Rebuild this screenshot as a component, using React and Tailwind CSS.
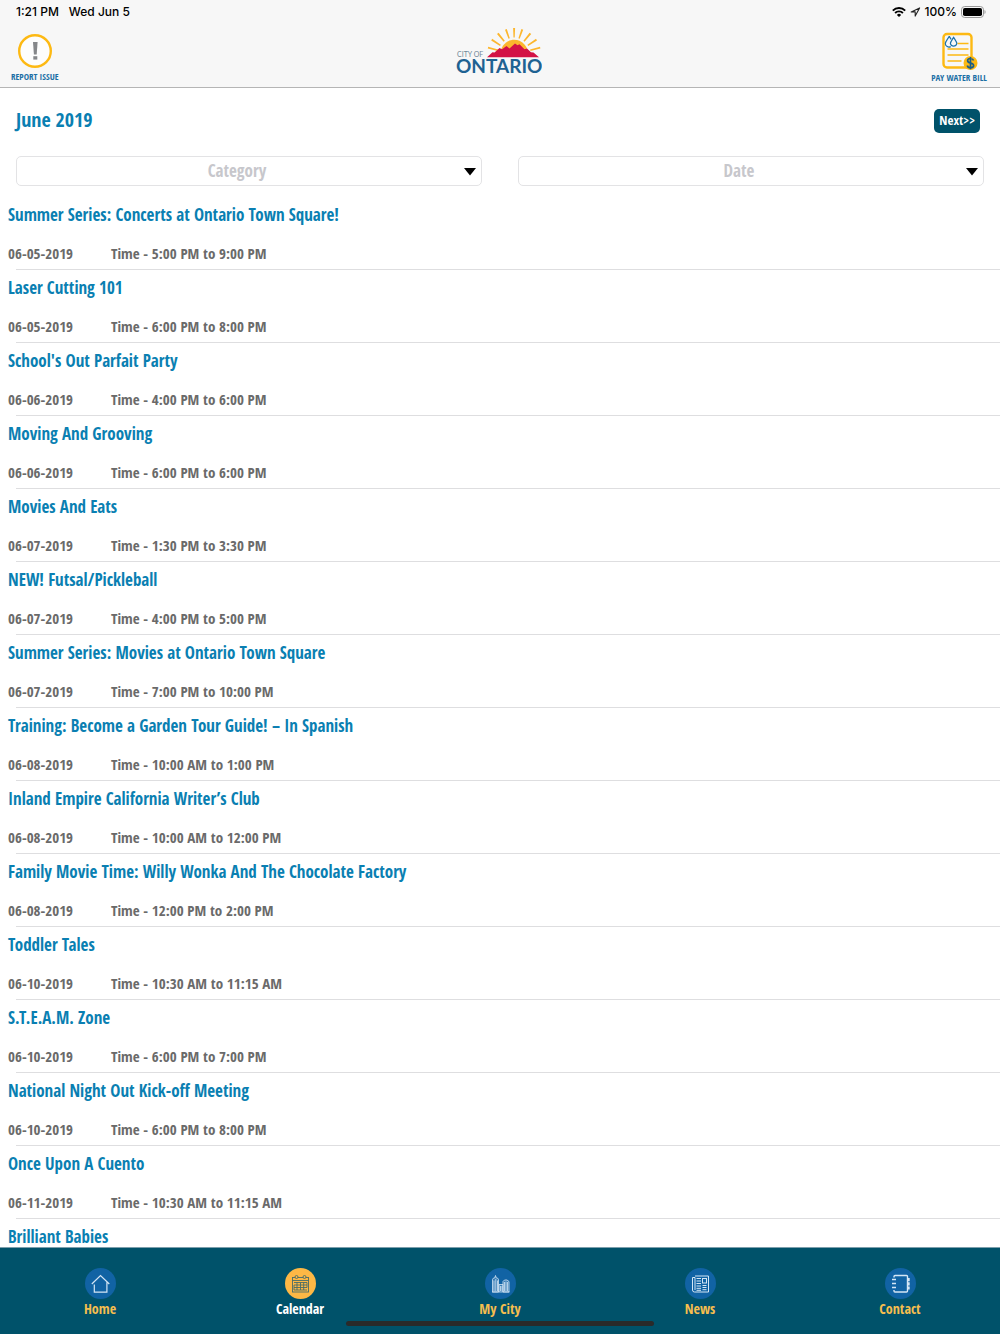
import React, { useState } from 'react'

const events = [
  { title: 'Summer Series: Concerts at Ontario Town Square!', date: '06-05-2019', time: '5:00 PM to 9:00 PM' },
  { title: 'Laser Cutting 101', date: '06-05-2019', time: '6:00 PM to 8:00 PM' },
  { title: "School's Out Parfait Party", date: '06-06-2019', time: '4:00 PM to 6:00 PM' },
  { title: 'Moving And Grooving', date: '06-06-2019', time: '6:00 PM to 6:00 PM' },
  { title: 'Movies And Eats', date: '06-07-2019', time: '1:30 PM to 3:30 PM' },
  { title: 'NEW! Futsal/Pickleball', date: '06-07-2019', time: '4:00 PM to 5:00 PM' },
  { title: 'Summer Series: Movies at Ontario Town Square', date: '06-07-2019', time: '7:00 PM to 10:00 PM' },
  { title: 'Training: Become a Garden Tour Guide! – In Spanish', date: '06-08-2019', time: '10:00 AM to 1:00 PM' },
  { title: 'Inland Empire California Writer’s Club', date: '06-08-2019', time: '10:00 AM to 12:00 PM' },
  { title: 'Family Movie Time: Willy Wonka And The Chocolate Factory', date: '06-08-2019', time: '12:00 PM to 2:00 PM' },
  { title: 'Toddler Tales', date: '06-10-2019', time: '10:30 AM to 11:15 AM' },
  { title: 'S.T.E.A.M. Zone', date: '06-10-2019', time: '6:00 PM to 7:00 PM' },
  { title: 'National Night Out Kick-off Meeting', date: '06-10-2019', time: '6:00 PM to 8:00 PM' },
  { title: 'Once Upon A Cuento', date: '06-11-2019', time: '10:30 AM to 11:15 AM' },
  { title: 'Brilliant Babies' },
]

function StatusBar() {
  return (
    <div className="flex h-6 items-center justify-between pl-4 pr-3.5 font-['Inter',sans-serif] text-xs font-medium text-black">
      <div className="flex gap-2.5">
        <span>1:21 PM</span>
        <span>Wed Jun 5</span>
      </div>
      <div className="flex items-center gap-1">
        <svg width="14" height="10" viewBox="0 0 14 10" fill="none" stroke="#000" strokeWidth="1.9">
          <path d="M0.8 3.6a8.8 8.8 0 0 1 12.4 0" />
          <path d="M3.1 6a5.5 5.5 0 0 1 7.8 0" />
          <path d="M7 10 4.9 7.9a3 3 0 0 1 4.2 0z" fill="#000" stroke="none" />
        </svg>
        <svg width="11" height="10" viewBox="0 0 11 10" fill="none" stroke="#222" strokeWidth="1.1" strokeLinejoin="round">
          <path d="M9.6 0.9 1.2 4.9h4v4.2z" />
        </svg>
        <span>100%</span>
        <svg width="25" height="12" viewBox="0 0 25 12">
          <rect x="0.5" y="0.5" width="22" height="11" rx="3.2" fill="none" stroke="#999" />
          <rect x="2" y="2" width="19" height="8" rx="1.8" fill="#000" />
          <path d="M23.5 4v4c1.5-.6 1.5-3.4 0-4z" fill="#999" />
        </svg>
      </div>
    </div>
  )
}

function ReportIcon() {
  return (
    <svg width="34" height="34" viewBox="0 0 34 34">
      <circle cx="17" cy="17" r="15.8" fill="#fdfdfd" stroke="#fdb913" strokeWidth="2.4" />
      <path d="M15 8h4.6l-.9 12.4h-2.8z" fill="#85878a" />
      <path d="M15.3 22.200h4v3.400h-4z" fill="#85878a" />
    </svg>
  )
}

function BillIcon() {
  return (
    <svg width="38" height="38" viewBox="0 0 38 38" fill="none">
      <rect x="3.5" y="2" width="28" height="33.5" rx="3.5" stroke="#fdb913" strokeWidth="2.4" />
      <path d="M17.5 11.5h11M7.5 17h21M7.5 23h21M7.5 29h14" stroke="#fdb913" strokeWidth="1.3" />
      <path d="M9.3 4.4C7 8 5.3 9.8 5.3 11.7a3.7 3.7 0 0 0 5.4 2.900M9.3 4.4l1.8 3" stroke="#1b72ab" strokeWidth="1.2" />
      <path d="M13.600 5.400c-1.900 3-3.200 4.500-3.200 6.200a3.300 3.300 0 0 0 6.400 0c0-1.700-1.300-3.200-3.200-6.200z" stroke="#1b72ab" strokeWidth="1.2" />
      <circle cx="30.5" cy="31" r="7" fill="#fdb913" />
      <path d="M33.500 28.400c-.4-1.300-1.500-1.900-3-1.900-1.700 0-2.900.8-2.900 2.200 0 3.200 6 1.500 6 4.700 0 1.500-1.300 2.300-3.100 2.300-1.700 0-2.900-.7-3.200-2.200M30.500 25v12.200" stroke="#1d5e85" strokeWidth="1.700" />
    </svg>
  )
}

function CityLogo() {
  return (
    <svg width="86" height="48" viewBox="0 0 86 48" role="img" aria-label="City of Ontario">
      <g fill="#fcb62d">
        <path d="M57.1 0h2l-.4 9.500h-1.200zM49 1.700l1.800-.6 3 9.200-1.300.5zM65.400 1.100l1.800.6-3.500 9.100-1.300-.5zM41 5.900l1.600-1.200 6.200 8-1.200 1zM73.600 4.700l1.600 1.200-6.600 7.800-1.200-1zM35.200 12.400l1-1.600 8.600 6-.8 1.200zM80 10.800l1 1.600-8.800 5.600-.8-1.200zM31.800 20.600l.4-1.900 10 2.800-.5 1.400zM84 18.700l.4 1.900-9.900 2.300-.5-1.400z" />
        <path d="M44.500 28c-1-9 5.500-16.200 13.700-16.200S73 19 72 28z" />
      </g>
      <path d="M31 29.200l5.500-5 2 .3 5-4.400 2.500 1.200 4.500-3.300 3 2.400 5.500-5 2.500 1.800 2-1 5 5 2.500-.6 4 3.600 2.500.3 5.500 4.700z" fill="#d31245" />
      <text x="1" y="29" fill="#6f8798" fontFamily="Lato, sans-serif" fontSize="7">CITY OF</text>
      <text x="0" y="45" fill="#1f6292" fontFamily="Lato, sans-serif" fontWeight="700" fontSize="19">ONTARIO</text>
    </svg>
  )
}

function FilterSelect({ label }) {
  return (
    <div className="relative flex-1">
      <select
        aria-label={label}
        defaultValue=""
        className="block h-[30px] w-full appearance-none rounded-[5px] border border-[#e3e3e5] bg-white pr-6 text-center text-[17px] font-bold text-[#c7c7cc] [text-align-last:center]"
      >
        <option value="">{label}</option>
      </select>
      <svg className="pointer-events-none absolute right-1.5 top-3" width="12" height="8" viewBox="0 0 12 8">
        <path d="M0 0h12L6 7.5z" fill="#000" />
      </svg>
    </div>
  )
}

function EventRow({ event }) {
  return (
    <li>
      <div className="flex h-[72px] flex-col justify-between py-1.5 pl-2">
        <h2 className="text-[17px] leading-6 font-bold text-[#0a7fb2]">{event.title}</h2>
        {event.date && (
          <div className="flex text-[15px] leading-5 font-bold text-[#6a6a6a]">
            <span className="w-[103px]">{event.date}</span>
            <span>Time - {event.time}</span>
          </div>
        )}
      </div>
      <div className="ml-4 h-px bg-[#dedee0]" />
    </li>
  )
}

const tabs = [
  {
    name: 'Home',
    icon: (
      <path d="M6.8 16 15.5 7.5 24.3 16M9.3 16.5v7.7h12.6V14" strokeWidth="1.2" />
    ),
  },
  {
    name: 'Calendar',
    icon: (
      <g strokeWidth="0.9">
        <rect x="7.5" y="9.5" width="16" height="14.5" />
        <path d="M7.5 12.5h16" />
        <circle cx="11.5" cy="9" r="1.5" fill="#fdb845" />
        <circle cx="19.5" cy="9" r="1.5" fill="#fdb845" />
        <path d="M9 14.5h13M9 17h13M9 19.5h13M9 22h13M9 17v5M12 14.5V22M15.5 14.5V22M18.7 14.5V22M22 14.5v5" />
      </g>
    ),
  },
  {
    name: 'My City',
    icon: (
      <g strokeWidth="0.8">
        <path d="M7.5 24V11.5l1-1.5h1.2l.8-2.5.8 2.500h1.200l1 1.500V24zM18 24V13.500l1.500-1.500h2.500l2 1.500V24zM14 24v-7.500h4V24M7 24h17.500" fill="#76a7d2" fillOpacity="0.4" />
        <path d="M9 12.5V23M10.8 11v12M12.5 12.5V23M15.5 18v5M17 18v5M19.5 14v9M21 13.5V23M22.5 14v9" />
      </g>
    ),
  },
  {
    name: 'News',
    icon: (
      <g strokeWidth="1">
        <path d="M10 8h13.5v16H9.5a2 2 0 0 1-2-2V9.5H10V22" />
        <rect x="17.5" y="10.5" width="4" height="4.5" />
        <path d="M11.5 10.5H16M11.5 13H16M11.5 15.5H16M11.5 18H16M11.5 20.3H16M17.5 17.5h4M17.5 19.5h4M17.5 21.7h4M11.5 22.3H16" />
      </g>
    ),
  },
  {
    name: 'Contact',
    icon: (
      <g strokeWidth="1.4">
        <path d="M9 9.500V8.500q0-1 1-1h11.500q1 0 1 1v14.500q0 1-1 1H10q-1 0-1-1V22" />
        <path d="M7 11.5h4M7 15.5h4M7 19.5h4" strokeWidth="1.6" />
        <path d="M23.7 10v3.2M23.7 14.2v3.2M23.7 18.4v3.2" strokeWidth="2" />
      </g>
    ),
  },
]

function TabBar({ active, onChange }) {
  return (
    <nav className="relative grid h-[87px] shrink-0 grid-cols-5 border-t border-[#7d9fac] bg-[#00526a]">
      {tabs.map((tab) => {
        const isActive = tab.name === active
        return (
          <button key={tab.name} type="button" className="flex flex-col items-center pt-5" onClick={() => onChange(tab.name)}>
            <svg width="31" height="31" viewBox="0 0 31 31" fill="none" stroke={isActive ? '#4a6d68' : '#d5e6f5'}>
              <circle cx="15.5" cy="15.5" r="15.5" fill={isActive ? '#fdb845' : '#1163a4'} stroke="none" />
              {tab.icon}
            </svg>
            <span className={isActive ? 'text-sm leading-5 font-bold text-white' : 'text-sm leading-5 font-bold text-[#f5be4f]'}>
              {tab.name}
            </span>
          </button>
        )
      })}
      <div className="absolute bottom-2 left-1/2 h-[5px] w-[308px] -translate-x-1/2 rounded-full bg-[#2a2a2a]" />
    </nav>
  )
}

export default function App() {
  const [active, setActive] = useState('Calendar')

  return (
    <div className="flex h-screen flex-col bg-white font-['Open_Sans_Condensed','Liberation_Sans_Narrow',sans-serif]">
      <header className="h-[88px] shrink-0 border-b border-[#b5b5b5] bg-[#f7f7f7]">
        <StatusBar />
        <div className="grid grid-cols-3 items-start pl-[11px] pr-[13px]">
          <button type="button" className="flex flex-col items-center justify-self-start pt-2.5 text-[9px] leading-[18px] font-bold text-[#1b6fa5]">
            <ReportIcon />
            <span>REPORT ISSUE</span>
          </button>
          <div className="justify-self-center pt-1">
            <CityLogo />
          </div>
          <button type="button" className="flex flex-col items-center justify-self-end pt-2 text-[9px] leading-4 font-bold text-[#1b6fa5]">
            <BillIcon />
            <span>PAY WATER BILL</span>
          </button>
        </div>
      </header>

      <main className="min-h-0 flex-1 overflow-hidden">
        <div className="flex h-[66px] items-center justify-between pl-4 pr-5">
          <h1 className="pb-0.5 text-xl font-bold text-[#0a7fb2]">June 2019</h1>
          <button type="button" className="h-6 rounded-[5px] bg-[#00526a] px-[5px] text-[13px] font-bold text-white">Next&gt;&gt;</button>
        </div>
        <div className="flex gap-9 px-4 pt-0.5">
          <FilterSelect label="Category" />
          <FilterSelect label="Date" />
        </div>
        <ul className="pt-[11px]">
          {events.map((event) => (
            <EventRow key={event.title} event={event} />
          ))}
        </ul>
      </main>

      <TabBar active={active} onChange={setActive} />
    </div>
  )
}
